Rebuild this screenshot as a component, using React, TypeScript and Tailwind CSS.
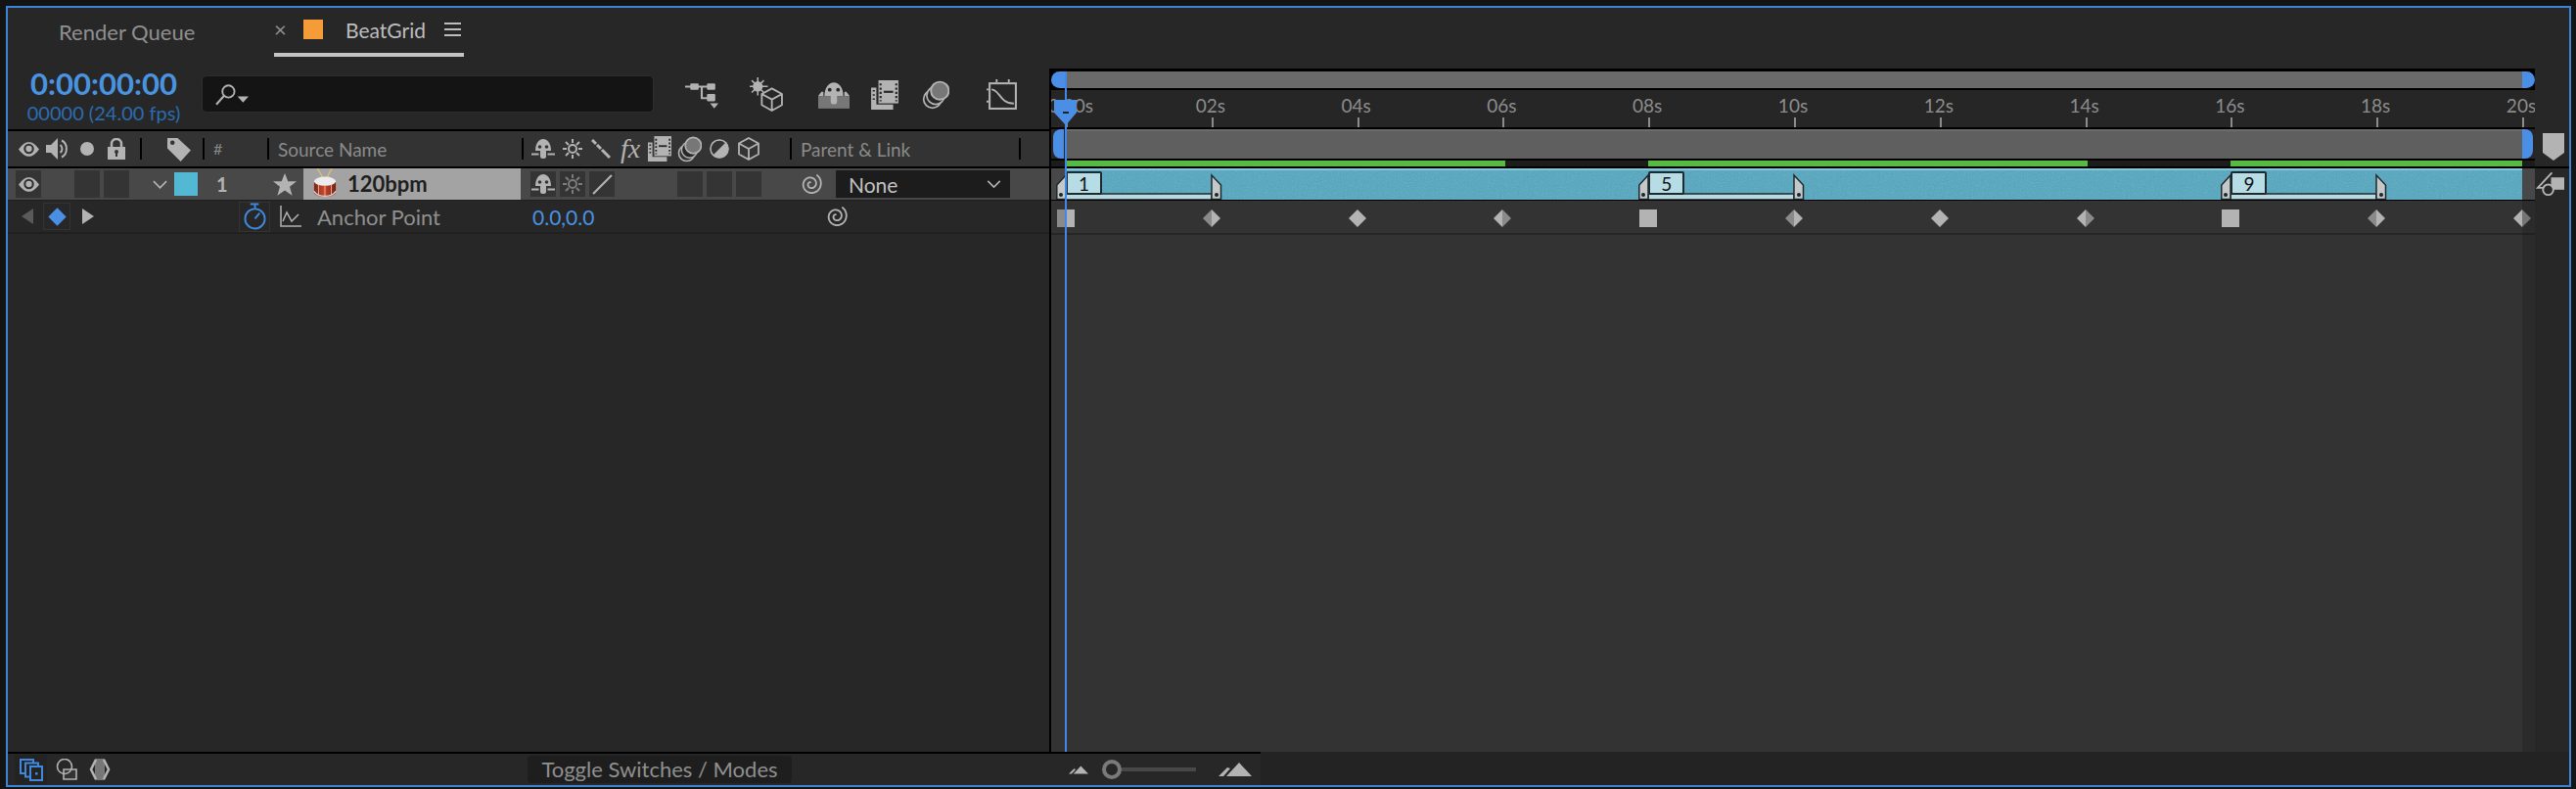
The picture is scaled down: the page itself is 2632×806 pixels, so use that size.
import type { ReactNode } from 'react';

const PX_PER_SEC = 74.4;
const ORIGIN = 15;
const at = (sec: number) => ORIGIN + sec * PX_PER_SEC;

const LIGHT = '#b3b3b3';
const DARK = '#8a8a8a';

const rulerSecs = [0, 2, 4, 6, 8, 10, 12, 14, 16, 18, 20];
const greenRanges = [
  [0, 6],
  [8, 14],
  [16, 20],
];
const keyframes = [
  { sec: 0, kind: 'split' },
  { sec: 2, kind: 'in' },
  { sec: 4, kind: 'full' },
  { sec: 6, kind: 'out' },
  { sec: 8, kind: 'square' },
  { sec: 10, kind: 'in' },
  { sec: 12, kind: 'full' },
  { sec: 14, kind: 'out' },
  { sec: 16, kind: 'square' },
  { sec: 18, kind: 'in' },
  { sec: 20, kind: 'out' },
];
const markers = [
  { sec: 0, label: '1' },
  { sec: 8, label: '5' },
  { sec: 16, label: '9' },
];

// pick whip: winds inward clockwise from a tip at the upper right
const spiralPath = Array.from({ length: 61 }, (_, i) => {
  const t = i / 60;
  const angle = -0.95 + t * 2 * Math.PI * 1.85;
  const radius = 11.5 - 9.5 * t;
  const x = 12 + radius * Math.cos(angle);
  const y = 12.5 + radius * Math.sin(angle);
  return `${i === 0 ? 'M' : 'L'}${x.toFixed(2)} ${y.toFixed(2)}`;
}).join('');

type IconProps = { className?: string };

function Svg({ vb, className, children }: { vb: string; className?: string; children: ReactNode }) {
  return (
    <svg viewBox={vb} className={`shrink-0 ${className ?? ''}`} fill="none">
      {children}
    </svg>
  );
}

const Eye = ({ className }: IconProps) => (
  <Svg vb="0 0 20 14" className={className}>
    <path d="M0 7C4 1.5 7 0 10 0s6 1.5 10 7c-4 5.500-7 7-10 7S4 12.500 0 7Z" fill={LIGHT} />
    <circle cx="10" cy="6.500" r="5" fill="#303030" />
    <circle cx="10" cy="6.500" r="3" fill={LIGHT} />
  </Svg>
);

const Speaker = ({ className }: IconProps) => (
  <Svg vb="0 0 23 24" className={className}>
    <path d="M0 8h5l7-7v22l-7-7H0Z" fill={LIGHT} />
    <path d="M14.500 8a5 5 0 0 1 0 8M16 3.500c6.500 3 6.500 14 0 17" stroke={LIGHT} strokeWidth="2" />
  </Svg>
);

const Lock = ({ className }: IconProps) => (
  <Svg vb="0 0 18 22" className={className}>
    <path d="M4 10V6a5 5 0 0 1 10 0v4" stroke={LIGHT} strokeWidth="2.500" />
    <rect y="9" width="18" height="13" fill={LIGHT} />
    <circle cx="9" cy="14" r="2" fill="#333" />
    <rect x="8" y="14" width="2" height="5" fill="#333" />
  </Svg>
);

const Tag = ({ className }: IconProps) => (
  <Svg vb="0 0 23 24" className={className}>
    <path d="M0 1h10l13 12-10 11L0 11Z" fill={LIGHT} />
    <circle cx="5" cy="5.500" r="2.200" fill="#333" />
  </Svg>
);

const Star = ({ className }: IconProps) => (
  <Svg vb="0 0 24 23" className={className}>
    <path d="M12 0l3.300 8.300H24l-7 5.400 2.600 9L12 17.600 4.400 22.700l2.600-9-7-5.400h8.700Z" fill={LIGHT} />
  </Svg>
);

const Shy = ({ className }: IconProps) => (
  <Svg vb="0 0 24 22" className={className}>
    <path d="M4 13C4 5 8 1 12 1s8 4 8 12Z" fill={LIGHT} />
    <circle cx="8.500" cy="9" r="1.800" fill="#333" />
    <circle cx="15.500" cy="9" r="1.800" fill="#333" />
    <rect x="9" y="11" width="6" height="10" rx="2.500" fill={LIGHT} />
    <path d="M0 16.500h7.500M16.500 16.500H24" stroke={LIGHT} strokeWidth="1.800" />
  </Svg>
);

const ShyBig = ({ className }: IconProps) => (
  <Svg vb="0 0 30 26" className={className}>
    <rect y="14" width="30" height="12" fill="#777" />
    <path d="M6 14C6 6 10 1 15 1s9 5 9 13Z" fill={LIGHT} />
    <path d="M0 14h30l-3-4h-2v4H5v-4H3Z" fill={LIGHT} />
    <circle cx="11" cy="8" r="1.800" fill="#272727" />
    <circle cx="19" cy="8" r="1.800" fill="#272727" />
    <rect x="12" y="10" width="6" height="12" rx="3" fill={LIGHT} />
  </Svg>
);

const Sun = ({ className, color = LIGHT }: IconProps & { color?: string }) => (
  <Svg vb="0 0 20 20" className={className}>
    <circle cx="10" cy="10" r="4" stroke={color} strokeWidth="2" />
    <path d="M10 0v4M10 16v4M0 10h4M16 10h4M3 3l3 3M14 14l3 3M17 3l-3 3M6 14l-3 3" stroke={color} strokeWidth="2" />
  </Svg>
);

const Diagonal = ({ className }: IconProps) => (
  <Svg vb="0 0 20 20" className={className}>
    <path d="M1 1l4 4M6 6l4 4M11 11l4 4M15 15l4 4" stroke={LIGHT} strokeWidth="3" />
  </Svg>
);

const Film = ({ className }: IconProps) => (
  <Svg vb="0 0 26 28" className={className}>
    <path d="M0 7h5v16h16v5H0Z" fill={LIGHT} />
    <path d="M1.500 10h2M1.500 14h2M1.500 18h2" stroke="#272727" strokeWidth="1.500" />
    <rect x="7" y="0" width="19" height="22" fill={LIGHT} />
    <path d="M9 3v17M24 3v17" stroke="#272727" strokeWidth="2" strokeDasharray="2 2" />
    <rect x="12" y="10" width="9" height="2" fill="#272727" />
  </Svg>
);

const Blur = ({ className }: IconProps) => (
  <Svg vb="0 0 26 28" className={className}>
    <circle cx="10" cy="18" r="8.500" stroke={LIGHT} strokeWidth="1.600" />
    <circle cx="13" cy="14.500" r="8.500" fill="#272727" stroke={LIGHT} strokeWidth="1.600" />
    <circle cx="17" cy="10" r="8.500" fill="#777" stroke={LIGHT} strokeWidth="1.800" />
  </Svg>
);

const HalfCircle = ({ className }: IconProps) => (
  <Svg vb="0 0 20 20" className={className}>
    <circle cx="10" cy="10" r="9.500" fill={LIGHT} />
    <path d="M3.500 16.500A9 9 0 0 1 16.500 3.500Z" fill="#333" />
    <circle cx="10" cy="10" r="9" stroke={LIGHT} strokeWidth="1.500" />
  </Svg>
);

const Cube = ({ className }: IconProps) => (
  <Svg vb="0 0 22 24" className={className}>
    <path d="M11 1l10 5.500v11L11 23 1 17.500v-11Zm-10 5.500L11 12l10-5.500M11 12v11" stroke={LIGHT} strokeWidth="1.800" strokeLinejoin="round" />
  </Svg>
);

const Spiral = ({ className }: IconProps) => (
  <Svg vb="0 0 24 25" className={className}>
    <path d={spiralPath} stroke={LIGHT} strokeWidth="1.900" strokeLinecap="round" strokeLinejoin="round" />
  </Svg>
);

const Chevron = ({ className }: IconProps) => (
  <Svg vb="0 0 16 9" className={className}>
    <path d="M1 1l7 7 7-7" stroke={LIGHT} strokeWidth="1.800" />
  </Svg>
);

const Drum = ({ className }: IconProps) => (
  <Svg vb="0 0 26 34" className={className}>
    <defs>
      <linearGradient id="drum-shell" x1="0" x2="1" y1="0" y2="0">
        <stop offset="0" stopColor="#7d2415" />
        <stop offset="0.45" stopColor="#c9482a" />
        <stop offset="1" stopColor="#7a2012" />
      </linearGradient>
    </defs>
    <path d="M4 0l8 13M21 0l-7 13" stroke="#dcbd7a" strokeWidth="1.500" />
    <path d="M1 15v12c0 3 5 5 12 5s12-2 12-5V15Z" fill="url(#drum-shell)" />
    <ellipse cx="13" cy="15" rx="12" ry="5" fill="#ececec" />
    <path d="M1 26c2 4 7 5.500 12 5.500S23 30 25 26" stroke="#d9d9d9" strokeWidth="1.500" />
    <path d="M6 19v11M13 20v12M20 19v11" stroke="#e5b9a5" strokeWidth="1" />
  </Svg>
);

const Stopwatch = ({ className }: IconProps) => (
  <Svg vb="0 0 24 29" className={className}>
    <circle cx="12" cy="17" r="10.500" stroke="#3f88dc" strokeWidth="2" />
    <path d="M7 1.500h9M12 2v4M12 17l5-6" stroke="#3f88dc" strokeWidth="2" />
  </Svg>
);

const GraphIcon = ({ className }: IconProps) => (
  <Svg vb="0 0 22 22" className={className}>
    <path d="M1 0v21h21" stroke={LIGHT} strokeWidth="1.500" />
    <path d="M3 16L7 7l5 9 7-7" stroke={LIGHT} strokeWidth="1.500" />
  </Svg>
);

const Tree = ({ className }: IconProps) => (
  <Svg vb="0 0 32 27" className={className}>
    <path d="M0 6h16M16 6h6M16 6v11h6" stroke={LIGHT} strokeWidth="2" />
    <rect x="5" y="3" width="8" height="6" rx="1" fill={LIGHT} />
    <rect x="21" y="3" width="8" height="6" rx="1" fill={LIGHT} />
    <rect x="21" y="13" width="8" height="7" rx="1" fill={LIGHT} />
    <path d="M24 22h8l-4 5Z" fill={LIGHT} />
  </Svg>
);

const Draft3d = ({ className }: IconProps) => (
  <Svg vb="0 0 33 34" className={className}>
    <circle cx="8" cy="9" r="5" fill={LIGHT} />
    <path d="M8 0v18M0 9h18M2 3l12 12M14 3L2 15" stroke={LIGHT} strokeWidth="1.500" />
    <path d="M22 11l10 5.500v11L22 33l-10-5.500v-11Zm-10 5.500L22 22l10-5.500M22 22v11" stroke={LIGHT} strokeWidth="1.800" fill="#272727" strokeLinejoin="round" />
  </Svg>
);

const GraphEditor = ({ className }: IconProps) => (
  <Svg vb="0 0 31 30" className={className}>
    <rect x="3" y="4" width="26" height="25" stroke={LIGHT} strokeWidth="2" />
    <path d="M5 10c8 0 8 14 22 14M10 0v3M22 0v3M0 10h2M0 22h2" stroke={LIGHT} strokeWidth="1.800" />
  </Svg>
);

const Search = ({ className }: IconProps) => (
  <Svg vb="0 0 33 22" className={className}>
    <circle cx="13" cy="8" r="6" stroke={LIGHT} strokeWidth="1.800" />
    <path d="M8.500 12.500L1 21" stroke={LIGHT} strokeWidth="2" />
    <path d="M22 13h11l-5.500 6Z" fill={LIGHT} />
  </Svg>
);

const Comps = ({ className }: IconProps) => (
  <Svg vb="0 0 24 23" className={className}>
    <rect x="1" y="1" width="13" height="14" stroke="#3f88dc" strokeWidth="2" />
    <rect x="6" y="4.500" width="13" height="14" fill="#232323" stroke="#3f88dc" strokeWidth="2" />
    <rect x="11" y="8" width="12" height="14" fill="#232323" stroke="#3f88dc" strokeWidth="2" />
    <rect x="16" y="14" width="2.500" height="2.500" fill="#3f88dc" />
  </Svg>
);

const CircleSquare = ({ className }: IconProps) => (
  <Svg vb="0 0 22 22" className={className}>
    <path d="M8 11h13v10H8Z" fill="#333" stroke={LIGHT} strokeWidth="1.600" />
    <circle cx="9" cy="8" r="7.500" stroke={LIGHT} strokeWidth="1.600" />
  </Svg>
);

const Brace = ({ className }: IconProps) => (
  <Svg vb="0 0 22 22" className={className}>
    <rect x="6" y="0" width="10" height="22" fill="#777" />
    <path d="M7 1L2 11l5 10M15 1l5 10-5 10" stroke={LIGHT} strokeWidth="2.600" />
  </Svg>
);

const Mountain = ({ className }: IconProps) => (
  <Svg vb="0 0 34 14" className={className}>
    <path d="M0 14L9 5l3 1-7 8ZM8 14L21 0l13 14Z" fill={LIGHT} />
  </Svg>
);

const Sep = () => <div className="w-[2px] h-[22px] bg-black shrink-0" />;
const Box = ({ children, className }: { children?: ReactNode; className?: string }) => (
  <div className={`w-[26px] h-[26px] bg-[#343434] flex items-center justify-center ${className ?? ''}`}>{children}</div>
);

function TabBar() {
  return (
    <div className="h-[50px] flex text-[#8f8f8f]">
      <div className="pl-[52px] w-[272px] pt-[12px] leading-[26px] text-[22px]">Render Queue</div>
      <div className="w-[194px] h-full border-b-[4px] border-[#c4c4c4] flex items-center pb-[2px] text-[21px]">
        <span className="text-[#8f8f8f] text-[22px] w-[30px] leading-none">×</span>
        <div className="w-[20px] h-[20px] bg-[#f39c38]" />
        <span className="ml-[23px] text-[#bdbdbd] leading-none">BeatGrid</span>
        <div className="ml-[19px] flex flex-col gap-[4px]">
          <div className="w-[17px] h-[2px] bg-[#bdbdbd]" />
          <div className="w-[17px] h-[2px] bg-[#bdbdbd]" />
          <div className="w-[17px] h-[2px] bg-[#bdbdbd]" />
        </div>
      </div>
    </div>
  );
}

function Toolbar() {
  return (
    <div className="h-[74px] flex items-start">
      <div className="w-[196px] pt-[12px] flex flex-col items-center shrink-0">
        <div className="text-[31px] leading-[30px] font-bold text-[#4a93e0]">0:00:00:00</div>
        <div className="text-[20px] leading-[22px] mt-[4px] text-[#2b6cb0]">00000 (24.00 fps)</div>
      </div>
      <div className="ml-[2px] mt-[19px] w-[462px] h-[38px] bg-[#141414] border border-[#2e2e2e] rounded-[5px] flex items-center pl-[13px] shrink-0">
        <Search className="w-[34px] h-[23px]" />
      </div>
      <div className="flex items-center mt-[21px]">
        <Tree className="ml-[32px] w-[34px] h-[29px]" />
        <Draft3d className="ml-[32px] w-[34px] h-[35px]" />
        <ShyBig className="ml-[36px] w-[32px] h-[28px]" />
        <Film className="ml-[22px] w-[28px] h-[30px]" />
        <Blur className="ml-[24px] w-[28px] h-[30px]" />
        <GraphEditor className="ml-[38px] w-[32px] h-[31px]" />
      </div>
    </div>
  );
}

const COLS = 'grid grid-cols-[135px_64px_66px_260px_274px_234px_1fr]';

function ColumnHeader() {
  return (
    <div className={`${COLS} h-[38px] border-t-2 border-black bg-[#333333] text-[#8a8a8a] items-center`}>
      <div className="flex items-center pl-[11px]">
        <Eye className="w-[21px] h-[15px]" />
        <Speaker className="ml-[7px] w-[23px] h-[24px]" />
        <div className="ml-[12px] w-[14px] h-[14px] rounded-full bg-[#b3b3b3]" />
        <Lock className="ml-[14px] w-[18px] h-[22px]" />
      </div>
      <div className="flex items-center">
        <Sep />
        <Tag className="ml-[26px] w-[24px] h-[25px]" />
      </div>
      <div className="flex items-center">
        <Sep />
        <span className="ml-[9px] text-[16px] leading-none">#</span>
      </div>
      <div className="flex items-center">
        <Sep />
        <span className="ml-[9px] text-[19px] leading-none">Source Name</span>
      </div>
      <div className="flex items-center">
        <Sep />
        <Shy className="ml-[8px] w-[24px] h-[22px]" />
        <Sun className="ml-[8px] w-[20px] h-[20px]" />
        <Diagonal className="ml-[9px] w-[20px] h-[20px]" />
        <span className="ml-[10px] w-[21px] text-[28px] leading-none italic font-[Liberation_Serif,serif] text-[#b3b3b3]">fx</span>
        <Film className="ml-[7px] w-[24px] h-[26px]" />
        <Blur className="ml-[6px] w-[25px] h-[27px]" />
        <HalfCircle className="ml-[8px] w-[20px] h-[20px]" />
        <Cube className="ml-[9px] w-[22px] h-[24px]" />
      </div>
      <div className="flex items-center">
        <Sep />
        <span className="ml-[9px] text-[19px] leading-none">Parent &amp; Link</span>
      </div>
      <div className="flex items-center">
        <Sep />
      </div>
    </div>
  );
}

function LayerRow() {
  return (
    <div className={`${COLS} h-[34px] border-t-2 border-black bg-[#484848] items-center`}>
      <div className="flex items-center pl-[8px]">
        <Box className="h-[28px]">
          <Eye className="w-[21px] h-[15px]" />
        </Box>
        <Box className="ml-[34px] h-[28px]" />
        <Box className="ml-[4px] h-[28px]" />
      </div>
      <div className="flex items-center pl-[13px]">
        <Chevron className="w-[15px] h-[9px]" />
        <div className="ml-[7px] w-[24px] h-[24px] bg-[#52b8d4]" />
      </div>
      <div className="pl-[14px] text-[20px] font-bold text-[#b3b3b3] leading-none">1</div>
      <div className="flex items-center h-full">
        <Star className="ml-[6px] w-[24px] h-[23px]" />
        <div className="ml-[7px] w-[222px] h-full bg-[#a3a3a3] flex items-center overflow-hidden">
          <Drum className="ml-[10px] w-[24px] h-[32px] -mt-[2px]" />
          <span className="ml-[11px] text-[22px] font-bold text-[#1e1e1e] leading-none">120bpm</span>
        </div>
      </div>
      <div className="flex items-center pl-[9px]">
        <Box>
          <Shy className="w-[24px] h-[22px]" />
        </Box>
        <Box className="ml-[4px]">
          <Sun className="w-[20px] h-[20px]" color="#7c7c7c" />
        </Box>
        <Box className="ml-[4px]">
          <Svg vb="0 0 20 20" className="w-[21px] h-[21px]">
            <path d="M1 19L19 1" stroke={LIGHT} strokeWidth="2" />
          </Svg>
        </Box>
        <Box className="ml-[64px]" />
        <Box className="ml-[4px]" />
        <Box className="ml-[4px]" />
      </div>
      <div className="flex items-center pl-[10px]">
        <Spiral className="w-[23px] h-[24px]" />
        <div className="ml-[14px] w-[178px] h-[28px] bg-[#1c1c1c] flex items-center justify-between pl-[13px] pr-[9px]">
          <span className="text-[21px] text-[#c2c2c2] leading-none">None</span>
          <Chevron className="w-[15px] h-[8px]" />
        </div>
      </div>
      <div />
    </div>
  );
}

function PropertyRow() {
  return (
    <div className="h-[35px] border-t border-b-2 border-t-[#1f1f1f] border-b-[#202020] bg-[#272727] flex items-center">
      <div className="ml-[14px] w-0 h-0 border-y-[8px] border-y-transparent border-r-[12px] border-r-[#5a5a5a]" />
      <div className="ml-[10px] w-[28px] h-[28px] border border-[#333] flex items-center justify-center">
        <div className="w-[13px] h-[13px] rotate-45 bg-[#4a8ee6]" />
      </div>
      <div className="ml-[12px] w-0 h-0 border-y-[8px] border-y-transparent border-l-[12px] border-l-[#b3b3b3]" />
      <div className="ml-[148px] w-[32px] h-[31px] border border-[#333] flex items-center justify-center">
        <Stopwatch className="w-[23px] h-[28px]" />
      </div>
      <GraphIcon className="ml-[10px] w-[22px] h-[22px]" />
      <span className="ml-[16px] w-[220px] text-[22px] text-[#8f8f8f] leading-none pt-[2px]">Anchor Point</span>
      <span className="w-[299px] text-[21px] text-[#4a93e0] leading-none">0.0,0.0</span>
      <Spiral className="w-[23px] h-[24px]" />
    </div>
  );
}

function Keyframe({ kind, sec }: { kind: string; sec: number }) {
  const left = kind === 'in' ? DARK : LIGHT;
  const right = kind === 'out' ? DARK : LIGHT;
  const square = kind === 'square' || kind === 'split';
  return (
    <svg viewBox="0 0 18 18" className="absolute top-[9px] w-[18px] h-[18px]" style={{ left: at(sec) - 9 }}>
      {square ? (
        <>
          <rect width="9" height="18" fill={kind === 'split' ? DARK : LIGHT} />
          <rect x="9" width="9" height="18" fill={LIGHT} />
        </>
      ) : (
        <>
          <path d="M9 0L0 9l9 9Z" fill={left} />
          <path d="M9 0l9 9-9 9Z" fill={right} />
        </>
      )}
    </svg>
  );
}

function Marker({ sec, label }: { sec: number; label: string }) {
  return (
    <div className="absolute top-0 w-[170px] h-[32px]" style={{ left: at(sec) - 10 }}>
      <svg viewBox="0 0 170 32" className="absolute inset-0 w-[170px] h-[32px]">
        <rect x="10" y="26" width="149" height="6" fill="#b9d9e1" stroke="#1f2a2e" strokeWidth="1.500" />
        <path d="M10 7L0.800 17v14.500H10Z" fill="#c4c8c9" stroke="#1f2a2e" strokeWidth="1.500" />
        <path d="M159 7l9.500 10v14.500H159Z" fill="#c4c8c9" stroke="#1f2a2e" strokeWidth="1.500" />
        <circle cx="5" cy="27" r="2" fill="#17262c" />
        <circle cx="164" cy="27" r="2" fill="#17262c" />
      </svg>
      <div className="absolute left-[10px] top-[3px] w-[37px] h-[24px] bg-[#b6dce6] border-2 border-[#1f2a2e] rounded-[2px] flex items-center justify-center text-[19px] leading-none text-[#111]">
        {label}
      </div>
    </div>
  );
}

function Timeline() {
  return (
    <div className="relative mt-[12px] w-[1518px] border-l-2 border-black bg-black flex flex-col">
      <div className="h-[17px] mt-[3px] flex">
        <div className="w-[14px] rounded-l-full bg-[#4a8ee6]" />
        <div className="w-[2px]" />
        <div className="w-[1487px] bg-[#6a6a6a]" />
        <div className="w-[13px] rounded-r-full bg-[#4a8ee6]" />
      </div>
      <div className="relative h-[38px] mt-[2px] bg-[#262626] overflow-hidden text-[19px] text-[#8c8c8c]">
        {rulerSecs.map((s) => (
          <div key={s} className="absolute top-0 h-full" style={{ left: at(s) }}>
            <span className="absolute top-[5px] -translate-x-1/2 leading-[22px]" style={{ left: s === 0 ? 5 : -1 }}>
              {s === 0 ? '0:00s' : `${String(s).padStart(2, '0')}s`}
            </span>
            <div className="absolute bottom-0 w-[2px] h-[10px] bg-[#8c8c8c]" />
          </div>
        ))}
      </div>
      <div className="h-[30px] mt-[2px] bg-[#262626] flex pl-[2px]">
        <div className="w-[11px] rounded-l-[8px] bg-[#4a8ee6]" />
        <div className="w-[2px]" />
        <div className="w-[1488px] bg-[#5f5f5f] border-t-2 border-[#6b6b6b]" />
        <div className="w-[11px] rounded-r-[8px] bg-[#4a8ee6]" />
      </div>
      <div className="relative h-[6px] mt-[2px] bg-[#1c1c1c]">
        {greenRanges.map(([a, b]) => (
          <div key={a} className="absolute top-0 h-full bg-[#57bb43]" style={{ left: at(a) + (a === 0 ? 1 : 0), width: at(b) - at(a) + (b === 20 ? 0 : 2) }} />
        ))}
      </div>
      <div className="relative h-[32px] mt-[2px] bg-[#484848]">
        <div className="absolute top-0 bottom-0 left-[15px] w-[1488px] bg-[#4ea6c0] border-t-2 border-[#86c6d6] overflow-hidden">
          <svg className="absolute inset-0 w-full h-full opacity-[0.28]">
            <filter id="bar-noise">
              <feTurbulence type="fractalNoise" baseFrequency="0.8" numOctaves="2" />
              <feColorMatrix type="saturate" values="0" />
            </filter>
            <rect width="100%" height="100%" filter="url(#bar-noise)" />
          </svg>
        </div>
        {markers.map((m) => (
          <Marker key={m.sec} sec={m.sec} label={m.label} />
        ))}
      </div>
      <div className="relative h-[33px] mt-[1px] bg-[#333333]">
        {keyframes.map((k) => (
          <Keyframe key={k.sec} kind={k.kind} sec={k.sec} />
        ))}
      </div>
      <div className="h-[2px] bg-[#262626]" />
      <div className="flex-1 bg-[#333333]" />
      <div className="absolute top-[135px] right-0 bottom-0 w-[13px] bg-black/15" />
      {/* playhead */}
      <div className="absolute top-[3px] bottom-0 left-[14px] w-[2px] bg-[#3f88e6]" />
      <svg viewBox="0 0 23 26" className="absolute top-[32px] left-[3px] w-[23px] h-[26px]">
        <path d="M0 0h23v13L12 26 0 13Z" fill="#4a8ee6" />
        <rect x="9" y="12" width="6" height="2" fill="#222" />
      </svg>
    </div>
  );
}

function RightGutter() {
  return (
    <div className="flex-1">
      <div className="h-[114px] border-b-2 border-black pt-[78px] pl-[8px]">
        <svg viewBox="0 0 22 28" className="w-[22px] h-[28px]">
          <path d="M0 0h22v20L11 28 0 20Z" fill={LIGHT} />
        </svg>
      </div>
      <div className="h-[32px] flex items-center pl-[1px]">
        <svg viewBox="0 0 30 26" className="w-[29px] h-[26px]">
          <path d="M17 1L2 17h12" stroke={LIGHT} strokeWidth="2" fill="none" />
          <rect x="16" y="6" width="14" height="13" fill={LIGHT} />
          <circle cx="13" cy="19" r="5.500" fill="#272727" stroke={LIGHT} strokeWidth="2" />
        </svg>
      </div>
    </div>
  );
}

function Footer() {
  return (
    <div className="h-[34px] flex">
      <div className="w-[1280px] border-t-2 border-black flex items-center">
        <div className="ml-[7px] w-[33px] h-[30px] bg-[#232323] flex items-center justify-center shrink-0">
          <Comps className="w-[24px] h-[23px]" />
        </div>
        <CircleSquare className="ml-[9px] w-[22px] h-[22px]" />
        <Brace className="ml-[12px] w-[22px] h-[22px]" />
        <div className="ml-[426px] w-[270px] h-[28px] -mt-[1px] bg-[#1e1e1e] rounded-[4px] flex items-center justify-center text-[22px] text-[#8f8f8f] leading-none shrink-0 whitespace-nowrap">
          Toggle Switches / Modes
        </div>
        <Mountain className="ml-[283px] w-[20px] h-[9px]" />
        <div className="ml-[14px] w-[20px] h-[20px] rounded-full border-[4px] border-[#7a7a7a] bg-[#272727]" />
        <div className="w-[76px] h-[4px] bg-[#484848]" />
        <Mountain className="ml-[23px] w-[34px] h-[14px]" />
      </div>
      <div className="flex-1 bg-[#232323]" />
    </div>
  );
}

export default function App() {
  return (
    <div className="w-[2632px] h-[806px] bg-[#141414] pl-[6px] pt-[6px] pr-[5px] pb-[2px] font-[Lato,sans-serif]">
      <div className="h-full border-2 border-[#3f82d6] bg-[#272727] flex flex-col">
        <TabBar />
        <div className="flex-1 flex min-h-0">
          <div className="w-[1064px] flex flex-col">
            <Toolbar />
            <ColumnHeader />
            <LayerRow />
            <PropertyRow />
          </div>
          <Timeline />
          <RightGutter />
        </div>
        <Footer />
      </div>
    </div>
  );
}
